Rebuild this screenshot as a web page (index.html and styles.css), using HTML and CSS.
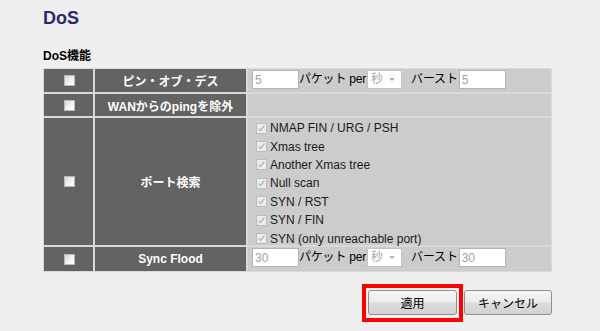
FILE: index.html
```html
<!DOCTYPE html>
<html lang="ja">
<head>
<meta charset="utf-8">
<title>DoS</title>
<link rel="stylesheet" href="styles.css">
</head>
<body>
<div class="page">
  <h1 class="title">DoS</h1>
  <div class="section">DoS機能</div>
  <div class="grid">
    <div class="cell cb"><span class="box"></span></div>
    <div class="cell label">ピン・オブ・デス</div>
    <div class="cell val">
      <div class="rate">
        <input class="field" type="text" value="5" disabled>
        <span class="txt">パケット per</span>
        <span class="sel">秒<span class="arrow"></span></span>
        <span class="txt burst">バースト</span>
        <input class="field" type="text" value="5" disabled>
      </div>
    </div>

    <div class="cell cb"><span class="box"></span></div>
    <div class="cell label">WANからのpingを除外</div>
    <div class="cell val"></div>

    <div class="cell cb"><span class="box"></span></div>
    <div class="cell label">ポート検索</div>
    <div class="cell val">
      <ul class="checks">
        <li><span class="cbox"><svg viewBox="0 0 11 11" width="9" height="9"><path d="M2 5.5 L4.3 8 L9 2" fill="none" stroke="#a9a9a9" stroke-width="1.3"/></svg></span>NMAP FIN / URG / PSH</li>
        <li><span class="cbox"><svg viewBox="0 0 11 11" width="9" height="9"><path d="M2 5.5 L4.3 8 L9 2" fill="none" stroke="#a9a9a9" stroke-width="1.3"/></svg></span>Xmas tree</li>
        <li><span class="cbox"><svg viewBox="0 0 11 11" width="9" height="9"><path d="M2 5.5 L4.3 8 L9 2" fill="none" stroke="#a9a9a9" stroke-width="1.3"/></svg></span>Another Xmas tree</li>
        <li><span class="cbox"><svg viewBox="0 0 11 11" width="9" height="9"><path d="M2 5.5 L4.3 8 L9 2" fill="none" stroke="#a9a9a9" stroke-width="1.3"/></svg></span>Null scan</li>
        <li><span class="cbox"><svg viewBox="0 0 11 11" width="9" height="9"><path d="M2 5.5 L4.3 8 L9 2" fill="none" stroke="#a9a9a9" stroke-width="1.3"/></svg></span>SYN / RST</li>
        <li><span class="cbox"><svg viewBox="0 0 11 11" width="9" height="9"><path d="M2 5.5 L4.3 8 L9 2" fill="none" stroke="#a9a9a9" stroke-width="1.3"/></svg></span>SYN / FIN</li>
        <li><span class="cbox"><svg viewBox="0 0 11 11" width="9" height="9"><path d="M2 5.5 L4.3 8 L9 2" fill="none" stroke="#a9a9a9" stroke-width="1.3"/></svg></span>SYN (only unreachable port)</li>
      </ul>
    </div>

    <div class="cell cb"><span class="box"></span></div>
    <div class="cell label">Sync Flood</div>
    <div class="cell val">
      <div class="rate">
        <input class="field" type="text" value="30" disabled>
        <span class="txt">パケット per</span>
        <span class="sel">秒<span class="arrow"></span></span>
        <span class="txt burst">バースト</span>
        <input class="field" type="text" value="30" disabled>
      </div>
    </div>
  </div>

  <div class="actions">
    <div class="highlight"><button class="btn apply" type="button">適用</button></div>
    <button class="btn cancel" type="button">キャンセル</button>
  </div>
</div>
</body>
</html>
```

FILE: styles.css
```css
* { box-sizing: border-box; }

body {
  margin: 0;
  background: #efefef;
  font-family: "Liberation Sans", "Noto Sans CJK JP", sans-serif;
  color: #000;
}

.page {
  padding: 8px 0 0 43px;
  width: 552px;
}

.title {
  margin: 0;
  font-size: 18px;
  line-height: 20px;
  font-weight: bold;
  color: #2b2b6c;
}

.section {
  margin-top: 21px;
  font-size: 12px;
  line-height: 14px;
  font-weight: bold;
}

.grid {
  margin-top: 5px;
  display: grid;
  grid-template-columns: 49px 151px 303px;
  grid-template-rows: 23px 22px 127px 24px;
  gap: 2px;
  padding: 1px;
  background: #d9d9d9;
  width: 509px;
}

.cell { display: flex; }

.cb {
  background: #636363;
  align-items: center;
  justify-content: center;
}

.box {
  width: 11px;
  height: 11px;
  border: 1px solid #b9b9b9;
  background: linear-gradient(135deg, #d6d6d6 0%, #f4f4f4 60%, #ffffff 100%);
  margin-left: 1px;
}

.label {
  background: #636363;
  color: #fff;
  font-weight: bold;
  font-size: 12px;
  align-items: center;
  justify-content: center;
}

.val {
  background: #cccccc;
}

.rate {
  display: flex;
  align-items: center;
  padding: 1px 0 0 4px;
  height: 20px;
  font-size: 12px;
}

.field {
  width: 47px;
  height: 19px;
  margin: 0;
  padding: 0 2px;
  border: 1px solid #b4b4b4;
  background: #fff;
  font: 12px "Liberation Sans", sans-serif;
  color: #a3a3a3;
}

.txt {
  line-height: 19px;
  letter-spacing: -0.2px;
}

.burst { margin-left: 9px; margin-right: 1px; }

.sel {
  position: relative;
  width: 35px;
  height: 19px;
  margin-left: 1px;
  border: 1px solid #c2c2c2;
  background: #fff;
  color: #a8a8a8;
  font-size: 12px;
  line-height: 17px;
  padding-left: 3px;
}

.arrow {
  position: absolute;
  right: 6px;
  top: 7px;
  width: 0;
  height: 0;
  border-left: 3px solid transparent;
  border-right: 3px solid transparent;
  border-top: 3px solid #b0b0b0;
}

.checks {
  list-style: none;
  margin: 0;
  padding: 1px 0 0 8px;
  font-size: 12px;
  color: #1a1a1a;
}

.checks li {
  display: flex;
  align-items: center;
  height: 18.4px;
}

.cbox {
  width: 11px;
  height: 11px;
  margin-right: 3px;
  border: 1px solid #bcbcbc;
  background: #ececec;
  display: flex;
  align-items: center;
  justify-content: center;
}

.actions {
  display: flex;
  justify-content: flex-end;
  align-items: flex-start;
  margin-top: 12px;
  width: 509px;
}

.highlight {
  border: 4px solid #ff0000;
  padding: 2px 2px 3px 2px;
}

.btn {
  height: 25px;
  margin: 0;
  border: 1px solid #8e8e8e;
  border-radius: 3px;
  background: linear-gradient(#f6f6f6 0%, #ececec 48%, #dcdcdc 52%, #d2d2d2 100%);
  font: 12px "Noto Sans CJK JP", "Liberation Sans", sans-serif;
  color: #000;
  padding: 0;
}

.apply { width: 89px; display: block; }

.cancel {
  width: 88px;
  margin-left: 1px;
  margin-top: 6px;
}
```
